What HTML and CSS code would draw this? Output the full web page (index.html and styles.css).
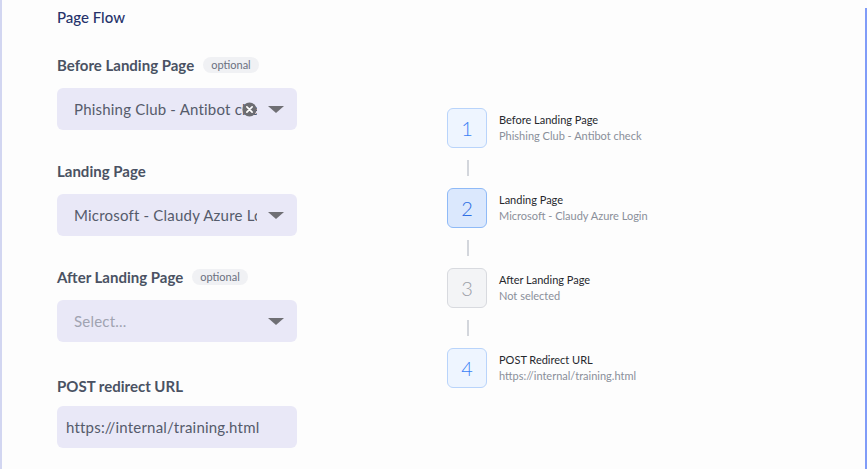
FILE: index.html
```html
<!DOCTYPE html>
<html lang="en">
<head>
    <meta charset="UTF-8">
    <meta name="viewport" content="width=device-width, initial-scale=1.0">
    <title>Page Flow</title>
    <link rel="stylesheet" href="styles.css">
</head>
<body>
    <div class="frame">
        <div class="panel">
            <h2 class="panel-title">Page Flow</h2>

            <div class="layout">
                <div class="form-column">
                    <div class="form-group">
                        <label>Before Landing Page <span class="badge">optional</span></label>
                        <div class="select">
                            <span class="select-value">Phishing Club - Antibot check</span>
                            <span class="clear-icon">
                                <svg width="15" height="15" viewBox="0 0 16 16">
                                    <circle cx="8" cy="8" r="7.5" fill="#6d6d72"/>
                                    <path d="M5.2 5.2 L10.8 10.8 M10.8 5.2 L5.2 10.8" stroke="#fff" stroke-width="1.8" stroke-linecap="round"/>
                                </svg>
                            </span>
                            <span class="caret"></span>
                        </div>
                    </div>

                    <div class="form-group">
                        <label>Landing Page</label>
                        <div class="select">
                            <span class="select-value">Microsoft - Claudy Azure Login</span>
                            <span class="caret"></span>
                        </div>
                    </div>

                    <div class="form-group">
                        <label>After Landing Page <span class="badge">optional</span></label>
                        <div class="select">
                            <span class="select-value placeholder">Select...</span>
                            <span class="caret"></span>
                        </div>
                    </div>

                    <div class="form-group form-group-last">
                        <label for="postUrl">POST redirect URL</label>
                        <input type="text" id="postUrl" class="text-input" value="https://internal/training.html">
                    </div>
                </div>

                <div class="flow-column">
                    <div class="step">
                        <div class="step-box">1</div>
                        <div class="step-text">
                            <div class="step-title">Before Landing Page</div>
                            <div class="step-sub">Phishing Club - Antibot check</div>
                        </div>
                    </div>
                    <div class="connector"></div>
                    <div class="step">
                        <div class="step-box active">2</div>
                        <div class="step-text">
                            <div class="step-title">Landing Page</div>
                            <div class="step-sub">Microsoft - Claudy Azure Login</div>
                        </div>
                    </div>
                    <div class="connector"></div>
                    <div class="step">
                        <div class="step-box empty">3</div>
                        <div class="step-text">
                            <div class="step-title">After Landing Page</div>
                            <div class="step-sub">Not selected</div>
                        </div>
                    </div>
                    <div class="connector"></div>
                    <div class="step">
                        <div class="step-box">4</div>
                        <div class="step-text">
                            <div class="step-title">POST Redirect URL</div>
                            <div class="step-sub">https://internal/training.html</div>
                        </div>
                    </div>
                </div>
            </div>
        </div>
        <div class="edge"></div>
    </div>
</body>
</html>
```

FILE: styles.css
```css
:root {
    --title-color: #26336b;
    --label-color: #4a5263;
    --field-bg: #e9e8f7;
    --field-text: #555b6b;
    --muted: #8a8f9a;
    --edge-color: #809cf8;
}

* {
    box-sizing: border-box;
}

body {
    margin: 0;
    font-family: Lato, "Open Sans", sans-serif;
    background-color: #fdfdfd;
}

.frame {
    display: flex;
    height: 469px;
    border-left: 2px solid #d2d6f1;
    overflow: hidden;
}

.panel {
    flex: 1;
    padding: 7px 0 0 55px;
}

.panel-title {
    margin: 0;
    font-size: 15px;
    font-weight: 500;
    line-height: 20px;
    color: var(--title-color);
}

.layout {
    display: flex;
    align-items: flex-start;
    margin-top: 28px;
}

.form-column {
    display: flex;
    flex-direction: column;
    gap: 31px;
    width: 240px;
}

.form-group {
    display: flex;
    flex-direction: column;
    gap: 13px;
}

.form-group-last {
    gap: 10px;
    margin-top: 3px;
}

label {
    display: flex;
    align-items: center;
    gap: 9px;
    height: 20px;
    font-size: 15px;
    font-weight: 700;
    color: var(--label-color);
}

.badge {
    padding: 1px 8px;
    border-radius: 8px;
    background-color: #f0f1f4;
    color: #6b7080;
    font-size: 11px;
    font-weight: 400;
    line-height: 14px;
}

.select {
    display: flex;
    align-items: center;
    height: 42px;
    padding: 0 13px 0 17px;
    border-radius: 6px;
    background-color: var(--field-bg);
}

.select-value {
    flex: 1;
    min-width: 0;
    white-space: nowrap;
    overflow: hidden;
    font-size: 15px;
    letter-spacing: 0.2px;
    color: var(--field-text);
}

.select-value.placeholder {
    color: #a0a3b1;
}

/* sits over the end of the value text */
.clear-icon {
    display: flex;
    margin-left: -15px;
}

.caret {
    width: 0;
    height: 0;
    margin-left: 11px;
    border-left: 8px solid transparent;
    border-right: 8px solid transparent;
    border-top: 7px solid #6f6f74;
}

.text-input {
    height: 42px;
    padding: 0 9px;
    border: none;
    border-radius: 6px;
    background-color: var(--field-bg);
    font-family: inherit;
    font-size: 15px;
    letter-spacing: 0.2px;
    color: var(--field-text);
}

.flow-column {
    display: flex;
    flex-direction: column;
    margin-left: 150px;
    margin-top: 53px;
}

.step {
    display: flex;
    align-items: center;
    gap: 12px;
}

.step-box {
    display: flex;
    align-items: center;
    justify-content: center;
    width: 40px;
    height: 40px;
    border: 1px solid #b9d4fb;
    border-radius: 6px;
    background-color: #eef5ff;
    color: #3b82f6;
    font-size: 20px;
    font-weight: 300;
}

.step-box.active {
    border-color: #8fbaf7;
    background-color: #dbe8fd;
    color: #2f6fe4;
}

.step-box.empty {
    border-color: #d8dadf;
    background-color: #f3f4f6;
    color: #9ca0a8;
}

.step-text {
    display: flex;
    flex-direction: column;
    gap: 2px;
    font-size: 11px;
    line-height: 14px;
}

.step-title {
    color: #26282e;
}

.step-sub {
    color: var(--muted);
}

.connector {
    width: 2px;
    height: 16px;
    margin: 12px 0 12px 20px;
    background-color: #d3d6dc;
}

.edge {
    width: 2px;
    margin-top: 8px;
    background-color: var(--edge-color);
}
```
